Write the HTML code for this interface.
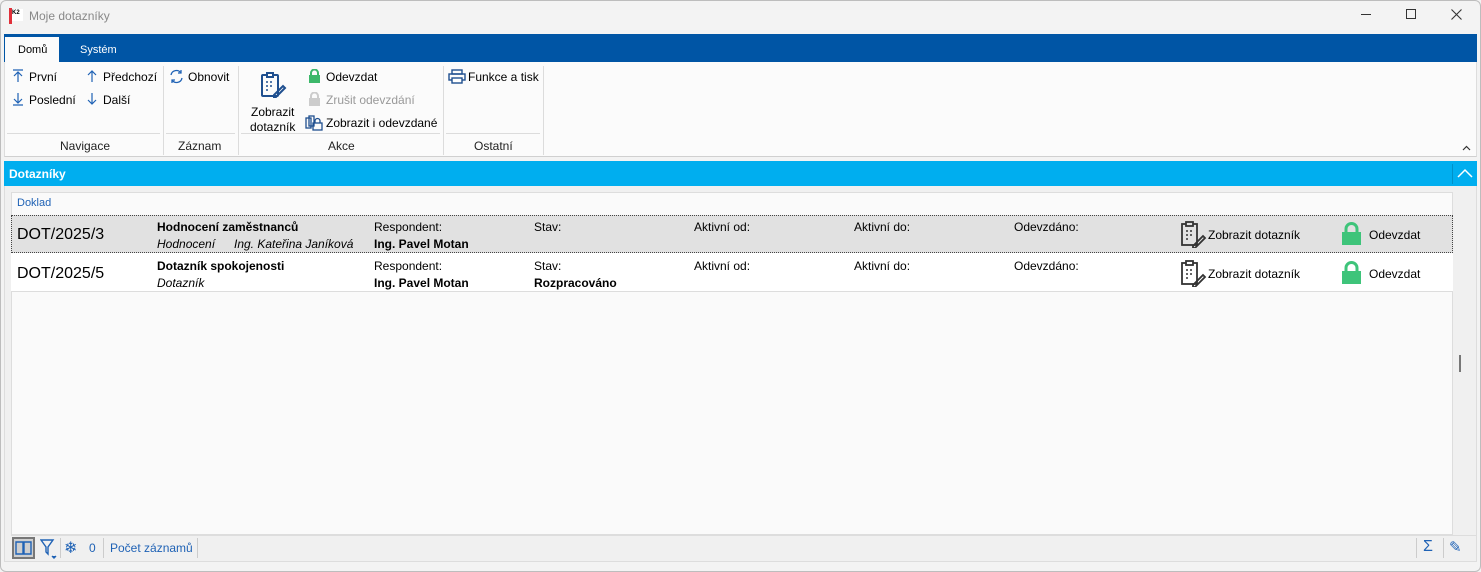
<!DOCTYPE html>
<html><head><meta charset="utf-8"><style>
*{margin:0;padding:0;box-sizing:border-box}
body{width:1481px;height:572px;overflow:hidden;background:#f3f3f3;font-family:"Liberation Sans",sans-serif;font-size:12px;color:#000;position:relative}
.a{position:absolute;white-space:nowrap}
.win{position:absolute;left:0;top:0;width:1481px;height:572px;border:1px solid #bdbdbd;border-radius:6px;background:#f3f3f3}
.sep{position:absolute;width:1px;background:#dcdcdc}
.b{font-weight:bold}
.i{font-style:italic}
.lbl{color:#222}
</style></head><body>
<div class="win"></div>
<!-- title -->
<div class="a" style="left:9px;top:8px;width:3px;height:16px;background:#e0303a"></div>
<div class="a" style="left:12px;top:9px;width:11px;height:12px;background:#fff;font-size:6px;font-weight:bold;line-height:8px">K2</div>
<div class="a" style="left:29px;top:9px;color:#888;font-size:12px">Moje dotazníky</div>
<div class="a" style="left:1361px;top:14px;width:10px;height:1px;background:#333"></div>
<div class="a" style="left:1406px;top:9px;width:10px;height:10px;border:1px solid #333"></div>
<svg class="a" style="left:1451px;top:9px" width="11" height="11"><path d="M0.5 0.5l10 10M10.5 0.5l-10 10" stroke="#333" stroke-width="1.1"/></svg>
<!-- tabs -->
<div class="a" style="left:4px;top:34px;width:1473px;height:28px;background:#0055a5"></div>
<div class="a" style="left:5px;top:37px;width:54px;height:25px;background:#fbfbfb"></div>
<div class="a" style="left:18px;top:44px;font-size:11px">Domů</div>
<div class="a" style="left:80px;top:44px;font-size:11px;color:#fff">Systém</div>
<!-- ribbon -->
<div class="a" style="left:4px;top:62px;width:1473px;height:95px;background:#fbfbfb;border-bottom:1px solid #d0d0d0;border-left:1px solid #ddd;border-right:1px solid #ddd"></div>
<div class="sep" style="left:163px;top:66px;height:89px"></div>
<div class="sep" style="left:238px;top:66px;height:89px"></div>
<div class="sep" style="left:443px;top:66px;height:89px"></div>
<div class="sep" style="left:543px;top:66px;height:89px"></div>
<div class="a" style="left:7px;top:133px;width:153px;height:1px;background:#dcdcdc"></div>
<div class="a" style="left:166px;top:133px;width:69px;height:1px;background:#dcdcdc"></div>
<div class="a" style="left:241px;top:133px;width:199px;height:1px;background:#dcdcdc"></div>
<div class="a" style="left:446px;top:133px;width:94px;height:1px;background:#dcdcdc"></div>
<svg class="a" style="left:12px;top:69px" width="12" height="14" fill="none" stroke="#1f62b5" stroke-width="1.2"><path d="M1 1h10M6 13V3M2 7l4-4 4 4"/></svg><div class="a" style="left:29px;top:70px">První</div>
<svg class="a" style="left:86px;top:69px" width="12" height="14" fill="none" stroke="#1f62b5" stroke-width="1.2"><path d="M6 13V2M2 6l4-4 4 4"/></svg><div class="a" style="left:103px;top:70px">Předchozí</div>
<svg class="a" style="left:12px;top:92px" width="12" height="14" fill="none" stroke="#1f62b5" stroke-width="1.2"><path d="M1 13h10M6 1v10M2 7l4 4 4-4"/></svg><div class="a" style="left:29px;top:93px">Poslední</div>
<svg class="a" style="left:86px;top:92px" width="12" height="14" fill="none" stroke="#1f62b5" stroke-width="1.2"><path d="M6 1v11M2 8l4 4 4-4"/></svg><div class="a" style="left:103px;top:93px">Další</div>
<svg class="a" style="left:169px;top:69px" width="15" height="15" fill="none" stroke="#1f62b5" stroke-width="1.3"><path d="M2 6a5.5 5.5 0 0 1 10-2M13 9a5.5 5.5 0 0 1-10 2"/><path d="M12 1v3H9M3 14v-3h3"/></svg><div class="a" style="left:188px;top:70px">Obnovit</div>
<svg class="a" style="left:259px;top:71px" width="28" height="28" viewBox="0 0 28 28" fill="none" stroke="#1f4f8f" stroke-width="2"><rect x="3" y="4" width="16" height="21" rx="1"/><rect x="8" y="2" width="6" height="4" fill="#fff"/><path d="M7 11h2M11 11h2M7 15h2M11 15h2M7 19h2" stroke-width="1.5"/><path d="M15 24l9-9 2 2-9 9h-2z"/></svg>
<div class="a" style="left:250px;top:105px;text-align:center;line-height:15px">Zobrazit<br>dotazník</div>
<svg class="a" style="left:308px;top:69px" width="13" height="14"><path d="M3 6V4a3.5 3.5 0 0 1 7 0v2" stroke="#3cb86a" stroke-width="2" fill="none"/><rect x="1" y="6" width="11" height="8" fill="#3cb86a"/></svg>
<div class="a" style="left:326px;top:70px">Odevzdat</div>
<svg class="a" style="left:308px;top:92px" width="13" height="14"><path d="M3 6V4a3.5 3.5 0 0 1 7 0v2" stroke="#ccc" stroke-width="2" fill="none"/><rect x="1" y="6" width="11" height="8" fill="#ccc"/></svg>
<div class="a" style="left:326px;top:93px;color:#999">Zrušit odevzdání</div>
<svg class="a" style="left:305px;top:115px" width="18" height="16" fill="none" stroke="#1f4f8f" stroke-width="1.3"><rect x="1" y="3" width="5" height="10"/><rect x="4" y="1" width="5" height="10"/><path d="M10 8V6a2.5 2.5 0 0 1 5 0v2"/><rect x="8" y="8" width="9" height="7"/></svg>
<div class="a" style="left:326px;top:116px">Zobrazit i odevzdané</div>
<svg class="a" style="left:448px;top:69px" width="18" height="15" fill="none" stroke="#1f4f8f" stroke-width="1.4"><rect x="4" y="1" width="10" height="4"/><rect x="1" y="5" width="16" height="6"/><rect x="4" y="9" width="10" height="5" fill="#fff"/></svg>
<div class="a" style="left:468px;top:70px">Funkce a tisk</div>
<div class="a lbl" style="left:60px;top:139px">Navigace</div>
<div class="a lbl" style="left:178px;top:139px">Záznam</div>
<div class="a lbl" style="left:328px;top:139px">Akce</div>
<div class="a lbl" style="left:474px;top:139px">Ostatní</div>
<svg class="a" style="left:1462px;top:145px" width="9" height="6"><path d="M1 5l3.5-3.5L8 5" stroke="#333" stroke-width="1.2" fill="none"/></svg>
<!-- cyan header -->
<div class="a" style="left:4px;top:161px;width:1473px;height:25px;background:#00aeef"></div>
<div class="a b" style="left:9px;top:167px;color:#fff;font-size:12px">Dotazníky</div>
<div class="a" style="left:1452px;top:164px;width:1px;height:20px;background:#0091c8"></div>
<svg class="a" style="left:1457px;top:168px" width="16" height="10"><path d="M1 9L8 2l7 7" stroke="#fff" stroke-width="1.5" fill="none"/></svg>
<!-- content -->
<div class="a" style="left:4px;top:186px;width:1473px;height:376px;background:#f0f0f0;border:1px solid #ddd;border-top:none"></div>
<div class="a" style="left:11px;top:192px;width:1442px;height:343px;background:#fafafa;border:1px solid #ddd"></div>
<div class="a" style="left:17px;top:197px;color:#1f62b5;font-size:11px">Doklad</div>
<div class="a" style="left:11px;top:215px;width:1442px;height:38px;background:#e1e1e1;border:1px dotted #444"></div>
<div class="a" style="left:11px;top:253px;width:1442px;height:39px;background:#fff;border-bottom:1px solid #ddd"></div>
<div class="a" style="left:17px;top:226px;font-size:16px">DOT/2025/3</div>
<div class="a" style="left:17px;top:265px;font-size:16px">DOT/2025/5</div>
<div class="a b" style="left:157px;top:220px">Hodnocení zaměstnanců</div>
<div class="a i" style="left:157px;top:237px">Hodnocení</div>
<div class="a i" style="left:234px;top:237px">Ing. Kateřina Janíková</div>
<div class="a b" style="left:157px;top:259px">Dotazník spokojenosti</div>
<div class="a i" style="left:157px;top:276px">Dotazník</div>
<div class="a" style="left:374px;top:220px">Respondent:</div><div class="a b" style="left:374px;top:237px">Ing. Pavel Motan</div>
<div class="a" style="left:374px;top:259px">Respondent:</div><div class="a b" style="left:374px;top:276px">Ing. Pavel Motan</div>
<div class="a" style="left:534px;top:220px">Stav:</div>
<div class="a" style="left:534px;top:259px">Stav:</div><div class="a b" style="left:534px;top:276px">Rozpracováno</div>
<div class="a" style="left:694px;top:220px">Aktivní od:</div><div class="a" style="left:694px;top:259px">Aktivní od:</div>
<div class="a" style="left:854px;top:220px">Aktivní do:</div><div class="a" style="left:854px;top:259px">Aktivní do:</div>
<div class="a" style="left:1014px;top:220px">Odevzdáno:</div><div class="a" style="left:1014px;top:259px">Odevzdáno:</div>
<svg class="a" style="left:1180px;top:220px" width="28" height="28" fill="none" stroke="#333" stroke-width="1.8"><rect x="2" y="4" width="15" height="21"/><rect x="6" y="2" width="7" height="4" fill="#e1e1e1"/><path d="M6 11h2M10 11h2M6 15h2M10 15h2M6 19h2" stroke-width="1.4"/><path d="M13 26l10-10 2 2-10 10h-2z"/></svg>
<svg class="a" style="left:1180px;top:259px" width="28" height="28" fill="none" stroke="#333" stroke-width="1.8"><rect x="2" y="4" width="15" height="21"/><rect x="6" y="2" width="7" height="4" fill="#fff"/><path d="M6 11h2M10 11h2M6 15h2M10 15h2M6 19h2" stroke-width="1.4"/><path d="M13 26l10-10 2 2-10 10h-2z"/></svg>
<div class="a" style="left:1208px;top:228px">Zobrazit dotazník</div>
<div class="a" style="left:1208px;top:267px">Zobrazit dotazník</div>
<svg class="a" style="left:1341px;top:222px" width="21" height="23"><path d="M5 10V7a5.5 5.5 0 0 1 11 0v3" stroke="#3ec47a" stroke-width="3" fill="none"/><rect x="1" y="10" width="19" height="13" fill="#3ec47a"/></svg>
<svg class="a" style="left:1341px;top:261px" width="21" height="23"><path d="M5 10V7a5.5 5.5 0 0 1 11 0v3" stroke="#3ec47a" stroke-width="3" fill="none"/><rect x="1" y="10" width="19" height="13" fill="#3ec47a"/></svg>
<div class="a" style="left:1369px;top:228px">Odevzdat</div>
<div class="a" style="left:1369px;top:267px">Odevzdat</div>
<div class="a" style="left:1459px;top:355px;width:2px;height:17px;background:#777"></div>
<!-- footer -->
<div class="a" style="left:11px;top:535px;width:1466px;height:1px;background:#ddd"></div>
<div class="a" style="left:12px;top:537px;width:23px;height:22px;background:#cfcfcf;border:2px solid #777"></div>
<svg class="a" style="left:15px;top:541px" width="18" height="14" fill="none" stroke="#1f62b5" stroke-width="1.4"><path d="M1 1h7v12H1zM9 1h7v12H9z"/></svg>
<svg class="a" style="left:40px;top:539px" width="18" height="20" fill="none" stroke="#1f62b5" stroke-width="1.4"><path d="M1 1h12L8 8v7L6 13V8z"/><path d="M12 17l2 2 2-2" fill="#1f62b5"/></svg>
<div class="a" style="left:60px;top:538px;width:1px;height:20px;background:#ccc"></div>
<div class="a" style="left:64px;top:538px;color:#1f62b5;font-size:16px">❄</div>
<div class="a" style="left:89px;top:541px;color:#1f62b5">0</div>
<div class="a" style="left:103px;top:538px;width:1px;height:20px;background:#ccc"></div>
<div class="a" style="left:110px;top:541px;color:#1f62b5">Počet záznamů</div>
<div class="a" style="left:197px;top:538px;width:1px;height:20px;background:#ccc"></div>
<div class="a" style="left:1416px;top:538px;width:1px;height:20px;background:#ccc"></div>
<div class="a" style="left:1423px;top:538px;color:#1f62b5;font-size:16px">Σ</div>
<div class="a" style="left:1443px;top:538px;width:1px;height:20px;background:#ccc"></div>
<div class="a" style="left:1449px;top:538px;color:#1f62b5;font-size:15px">✎</div>
</body></html>
